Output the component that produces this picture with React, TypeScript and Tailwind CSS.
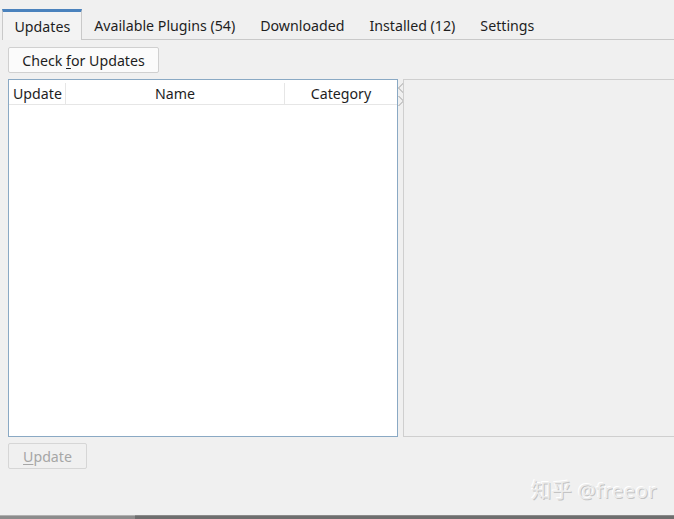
import React from 'react';

const TABS = ['Updates', 'Available Plugins (54)', 'Downloaded', 'Installed (12)', 'Settings'];

export default function App() {
  return (
    <div
      className="relative w-[674px] h-[519px] overflow-hidden bg-[#f0f0f0] text-[14.2px] text-[#1e1e1e]"
      style={{ fontFamily: '"Noto Sans", "Noto Sans CJK SC", sans-serif' }}
    >
      {/* Tab bar */}
      <div className="flex h-[40px] pt-[9px] pl-[2px]">
        {TABS.map((t, i) =>
          i === 0 ? (
            <div
              key={t}
              className="flex items-center pt-[2px] h-[31px] pl-[11.5px] pr-[10.5px] border-t-[3px] border-t-[#4a82bd] border-x border-x-[#c9c9c9] bg-[#f3f3f3]"
            >
              {t}
            </div>
          ) : (
            <div
              key={t}
              className="flex items-center pt-[3px] h-[31px] px-[12.5px] border-b border-b-[#c9c9c9]"
            >
              {t}
            </div>
          )
        )}
        <div className="flex-1 border-b border-b-[#c9c9c9]" />
      </div>

      {/* Toolbar */}
      <div className="pl-[8px] pt-[7px]">
        <button className="h-[26px] w-[151px] border border-[#d0d0d0] rounded-[2px] bg-[#fbfbfb] leading-none pt-[3px]">
          Check <span className="underline underline-offset-2">f</span>or Updates
        </button>
      </div>

      {/* Main split */}
      <div className="flex pl-[8px] pt-[6px] h-[364px]">
        <div className="w-[390px] h-[358px] border border-[#8aa9c4] bg-white flex flex-col">
          <div className="flex h-[25px] border-b border-[#e6e6e6] pt-[3px]">
            <div className="w-[57px] flex items-center pl-[4px] border-r border-[#e6e6e6]">Update</div>
            <div className="w-[219px] flex items-center justify-center border-r border-[#e6e6e6]">Name</div>
            <div className="flex-1 flex items-center justify-center">Category</div>
          </div>
        </div>
        <div className="w-[5px] flex flex-col items-center pt-[3px]">
          <svg width="6" height="26" viewBox="0 0 6 26" fill="none" stroke="#a0a0a0" strokeWidth="1">
            <path d="M5.5 1 L0.5 6 L5.5 11" />
            <path d="M0.5 14 L5.5 19 L0.5 24" />
          </svg>
        </div>
        <div className="flex-1 h-[358px] border border-r-0 border-[#cfcfcf] bg-[#f0f0f0]" />
      </div>

      {/* Bottom button */}
      <div className="pl-[8px] pt-[6px]">
        <button className="h-[26px] w-[79px] border border-[#d6d6d6] rounded-[2px] bg-[#f0f0f0] text-[#a6a6a6] leading-none pt-[3px]">
          <span className="underline underline-offset-2">U</span>pdate
        </button>
      </div>

      {/* Watermark */}
      <div
        className="absolute right-[17px] top-[476px] text-[20px] text-[#ececec] tracking-[0.5px]"
        style={{ textShadow: '1px 1px 0 #c4c4c4, -1px -1px 0 #ffffff' }}
      >
        知乎 @freeor
      </div>

      {/* Bottom strip */}
      <div className="absolute left-0 right-0 bottom-0 flex h-[4px]">
        <div className="w-[135px] bg-[#8c8c8c] border-t border-[#b0b0b0]" />
        <div className="flex-1 bg-[#6e6e6e] border-t border-[#8a8a8a]" />
      </div>
    </div>
  );
}
